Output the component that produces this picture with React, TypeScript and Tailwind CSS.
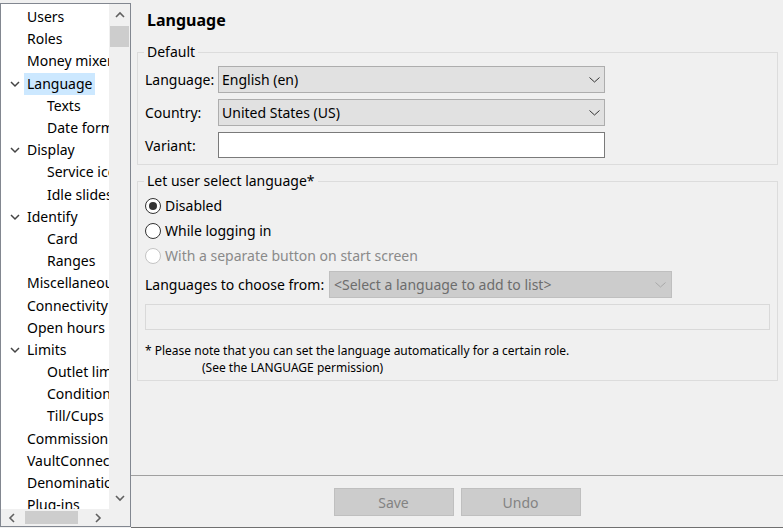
import type { ReactNode } from 'react'

type TreeNode = { label: string; level: 0 | 1; open?: boolean; selected?: boolean }

const tree: TreeNode[] = [
  { label: 'Users', level: 0 },
  { label: 'Roles', level: 0 },
  { label: 'Money mixer', level: 0 },
  { label: 'Language', level: 0, open: true, selected: true },
  { label: 'Texts', level: 1 },
  { label: 'Date format', level: 1 },
  { label: 'Display', level: 0, open: true },
  { label: 'Service icons', level: 1 },
  { label: 'Idle slideshow', level: 1 },
  { label: 'Identify', level: 0, open: true },
  { label: 'Card', level: 1 },
  { label: 'Ranges', level: 1 },
  { label: 'Miscellaneous', level: 0 },
  { label: 'Connectivity', level: 0 },
  { label: 'Open hours', level: 0 },
  { label: 'Limits', level: 0, open: true },
  { label: 'Outlet limits', level: 1 },
  { label: 'Conditions', level: 1 },
  { label: 'Till/Cups', level: 1 },
  { label: 'Commission', level: 0 },
  { label: 'VaultConnect', level: 0 },
  { label: 'Denomination', level: 0 },
  { label: 'Plug-ins', level: 0 },
]

const arrowPoints = {
  up: '1,7 5,3 9,7',
  down: '1,3 5,7 9,3',
  left: '7,1 3,5 7,9',
  right: '3,1 7,5 3,9',
}

function Arrow({ dir, color = '#606060', width = 1.6 }: { dir: keyof typeof arrowPoints; color?: string; width?: number }) {
  return (
    <svg width="10" height="10" viewBox="0 0 10 10" className="shrink-0">
      <polyline points={arrowPoints[dir]} fill="none" stroke={color} strokeWidth={width} />
    </svg>
  )
}

function ComboArrow({ color = '#333' }: { color?: string }) {
  return (
    <svg width="11" height="6" viewBox="0 0 11 6" className="shrink-0">
      <polyline points="0.5,0.5 5.5,5 10.5,0.5" fill="none" stroke={color} strokeWidth="1" />
    </svg>
  )
}

function Radio({ checked, disabled, children }: { checked?: boolean; disabled?: boolean; children: ReactNode }) {
  return (
    <div className={`flex h-[25px] items-center gap-[4px] ${disabled ? 'text-[#8a8a8a]' : ''}`}>
      <span
        className={`flex h-[16px] w-[16px] items-center justify-center rounded-full border bg-white ${
          disabled ? 'border-[#c4c4c4]' : 'border-[#333]'
        }`}
      >
        {checked && <span className="h-[8px] w-[8px] rounded-full bg-[#333]" />}
      </span>
      {children}
    </div>
  )
}

export default function App() {
  return (
    <div className="flex h-[528px] w-[783px] overflow-hidden bg-[#f0f0f0] font-['Noto_Sans',sans-serif] text-[14px] text-black">
      {/* navigation tree */}
      <aside className="mt-[3px] flex h-[524px] w-[131px] shrink-0 flex-col border border-[#828790]">
        <div className="flex min-h-0 flex-1">
          <ul className="min-w-0 flex-1 overflow-hidden whitespace-nowrap bg-white pt-[2px]">
            {tree.map((node) => (
              <li key={node.label} className="flex h-[22.2px] items-center">
                {node.level === 0 ? (
                  <span className="flex w-[23px] shrink-0 justify-end pr-[4px]">
                    {node.open && <Arrow dir="down" color="#444" width={1.5} />}
                  </span>
                ) : (
                  <span className="w-[43px] shrink-0" />
                )}
                <span className={`shrink-0 px-[3px] leading-[22px] ${node.selected ? 'bg-[#cce8ff]' : ''}`}>
                  {node.label}
                </span>
              </li>
            ))}
          </ul>
          <div className="flex w-[21px] shrink-0 flex-col items-center bg-[#f0f0f0]">
            <div className="flex h-[22px] items-center">
              <Arrow dir="up" />
            </div>
            <div className="h-[21px] w-[19px] bg-[#cdcdcd]" />
            <div className="flex-1" />
            <div className="flex h-[22px] items-center">
              <Arrow dir="down" />
            </div>
          </div>
        </div>
        <div className="flex h-[17px] items-center bg-[#f0f0f0]">
          <span className="flex w-[22px] justify-center">
            <Arrow dir="left" />
          </span>
          <span className="ml-[2px] h-[13px] w-[53px] bg-[#cdcdcd]" />
          <span className="flex-1" />
          <span className="flex w-[22px] justify-center">
            <Arrow dir="right" />
          </span>
          <span className="w-[21px]" />
        </div>
      </aside>

      {/* settings page */}
      <main className="flex min-w-0 flex-1 flex-col border-b border-[#707070]">
        <div className="min-h-0 flex-1 pl-[6px] pr-[5px]">
          <h1 className="flex h-[40px] items-center pl-[10px] text-[16px] font-bold">Language</h1>

          <fieldset className="mt-[2px] border border-[#dcdcdc] px-[7px] pb-[6px] pt-[4px]">
            <legend className="-ml-px px-[3px] leading-[20px]">Default</legend>
            <div className="flex flex-col gap-[6px]">
              <div className="flex h-[27px] items-center">
                <span className="w-[73px]">Language:</span>
                <div className="flex h-[27px] w-[387px] items-center justify-between border border-[#adadad] bg-[#e1e1e1] pl-[3px] pr-[4px]">
                  <span>English (en)</span>
                  <ComboArrow />
                </div>
              </div>
              <div className="flex h-[27px] items-center">
                <span className="w-[73px]">Country:</span>
                <div className="flex h-[27px] w-[387px] items-center justify-between border border-[#adadad] bg-[#e1e1e1] pl-[3px] pr-[4px]">
                  <span>United States (US)</span>
                  <ComboArrow />
                </div>
              </div>
              <div className="flex h-[26px] items-center">
                <span className="w-[73px]">Variant:</span>
                <div className="h-[26px] w-[387px] border border-[#7a7a7a] bg-white" />
              </div>
            </div>
          </fieldset>

          <fieldset className="mt-[6px] border border-[#dcdcdc] px-[7px] pb-[4px] pt-[2px]">
            <legend className="-ml-px px-[3px] leading-[20px]">Let user select language*</legend>
            <Radio checked>Disabled</Radio>
            <Radio>While logging in</Radio>
            <Radio disabled>With a separate button on start screen</Radio>
            <div className="mt-[3px] flex h-[27px] items-center">
              <span className="w-[184px]">Languages to choose from:</span>
              <div className="flex h-[27px] w-[343px] items-center justify-between border border-[#bfbfbf] bg-[#cccccc] pl-[4px] pr-[5px] text-[#6d6d6d]">
                <span>&lt;Select a language to add to list&gt;</span>
                <ComboArrow color="#a8a8a8" />
              </div>
            </div>
            <div className="mt-[6px] h-[26px] border border-[#d9d9d9]" />
            <p className="mt-[12px] text-[12px] leading-[17px]">
              * Please note that you can set the language automatically for a certain role.
            </p>
            <p className="pl-[57px] text-[12px] leading-[17px]">(See the LANGUAGE permission)</p>
          </fieldset>
        </div>

        <div className="flex h-[52px] shrink-0 justify-center gap-[7px] border-t border-[#a0a0a0] pt-[12px]">
          <button className="h-[28px] w-[120px] border border-[#bfbfbf] bg-[#cccccc] text-[#838383]">Save</button>
          <button className="h-[28px] w-[120px] border border-[#bfbfbf] bg-[#cccccc] text-[#838383]">Undo</button>
        </div>
      </main>
    </div>
  )
}
